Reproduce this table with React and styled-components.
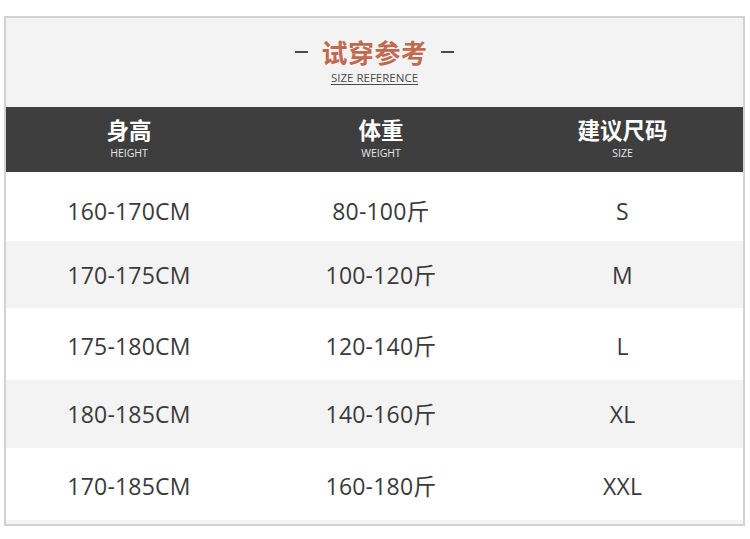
import React from "react";
import styled, { createGlobalStyle } from "styled-components";

const GlobalStyle = createGlobalStyle`
  body {
    margin: 0;
    background: #ffffff;
    font-family: "Noto Sans CJK SC", "Noto Sans", sans-serif;
  }
`;

const Frame = styled.div`
  margin: 16px 0 0 4px;
  width: 737px;
  border: 2px solid #d2d2d2;
  background: #f4f3f3;
  padding-bottom: 4px;
`;

const TitleBlock = styled.div`
  height: 89px;
  display: flex;
  flex-direction: column;
  align-items: center;
  padding-top: 19px;
  box-sizing: border-box;
`;

const TitleRow = styled.div`
  display: flex;
  align-items: center;
  gap: 13px;
`;

const Dash = styled.span`
  width: 13px;
  height: 2px;
  background: #4a4a4a;
`;

const Title = styled.h1`
  margin: 0;
  font-size: 26px;
  line-height: 30px;
  font-weight: 700;
  color: #c06a52;
  letter-spacing: 0.5px;
`;

const Subtitle = styled.div`
  font-family: "Open Sans", sans-serif;
  font-size: 11.5px;
  line-height: 12px;
  margin-top: 5px;
  color: #4a4a4a;
  text-decoration: underline;
  text-underline-offset: 2px;
`;

const Row = styled.div`
  display: grid;
  grid-template-columns: 246px 258px 233px;
  height: ${({ h }) => h}px;
  background: ${({ shaded }) => (shaded ? "#f4f3f3" : "#ffffff")};
`;

const HeadRow = styled(Row)`
  background: #3e3e3e;
  color: #ffffff;
`;

const Cell = styled.div`
  display: flex;
  flex-direction: column;
  align-items: center;
  justify-content: center;
  padding-right: ${({ last }) => (last ? 8 : 0)}px;
  padding-top: ${({ shift }) => shift || 0}px;
`;

const HeadCell = styled(Cell)`
  justify-content: flex-start;
  padding-top: 9px;
`;

const HeadLabel = styled.div`
  font-size: 22.5px;
  line-height: 27px;
  font-weight: 700;
`;

const HeadSub = styled.div`
  font-family: "Open Sans", sans-serif;
  font-size: 10.5px;
  line-height: 12px;
  margin-top: 3.5px;
  color: #e8e8e8;
`;

const Value = styled.div`
  font-family: "Open Sans", "Noto Sans CJK SC", sans-serif;
  font-size: 23px;
  line-height: 28px;
  letter-spacing: 0.2px;
  color: #3a3a3a;
`;

const heads = [
  ["身高", "HEIGHT"],
  ["体重", "WEIGHT"],
  ["建议尺码", "SIZE"],
];

const rows = [
  { h: 69, shift: 8, v: ["160-170CM", "80-100斤", "S"] },
  { h: 67, shift: 1, v: ["170-175CM", "100-120斤", "M"] },
  { h: 72, shift: 4, v: ["175-180CM", "120-140斤", "L"] },
  { h: 68, shift: -7, v: ["180-185CM", "140-160斤", "XL"] },
  { h: 72, shift: 4, v: ["170-185CM", "160-180斤", "XXL"] },
];

export default function App() {
  return (
    <>
      <GlobalStyle />
      <Frame>
        <TitleBlock>
          <TitleRow>
            <Dash />
            <Title>试穿参考</Title>
            <Dash />
          </TitleRow>
          <Subtitle>SIZE REFERENCE</Subtitle>
        </TitleBlock>
        <HeadRow h={65}>
          {heads.map(([cn, en], i) => (
            <HeadCell key={en} last={i === 2}>
              <HeadLabel>{cn}</HeadLabel>
              <HeadSub>{en}</HeadSub>
            </HeadCell>
          ))}
        </HeadRow>
        {rows.map((r, idx) => (
          <Row key={idx} h={r.h} shaded={idx % 2 === 1}>
            {r.v.map((t, i) => (
              <Cell key={i} last={i === 2} shift={r.shift}>
                <Value>{t}</Value>
              </Cell>
            ))}
          </Row>
        ))}
      </Frame>
    </>
  );
}
